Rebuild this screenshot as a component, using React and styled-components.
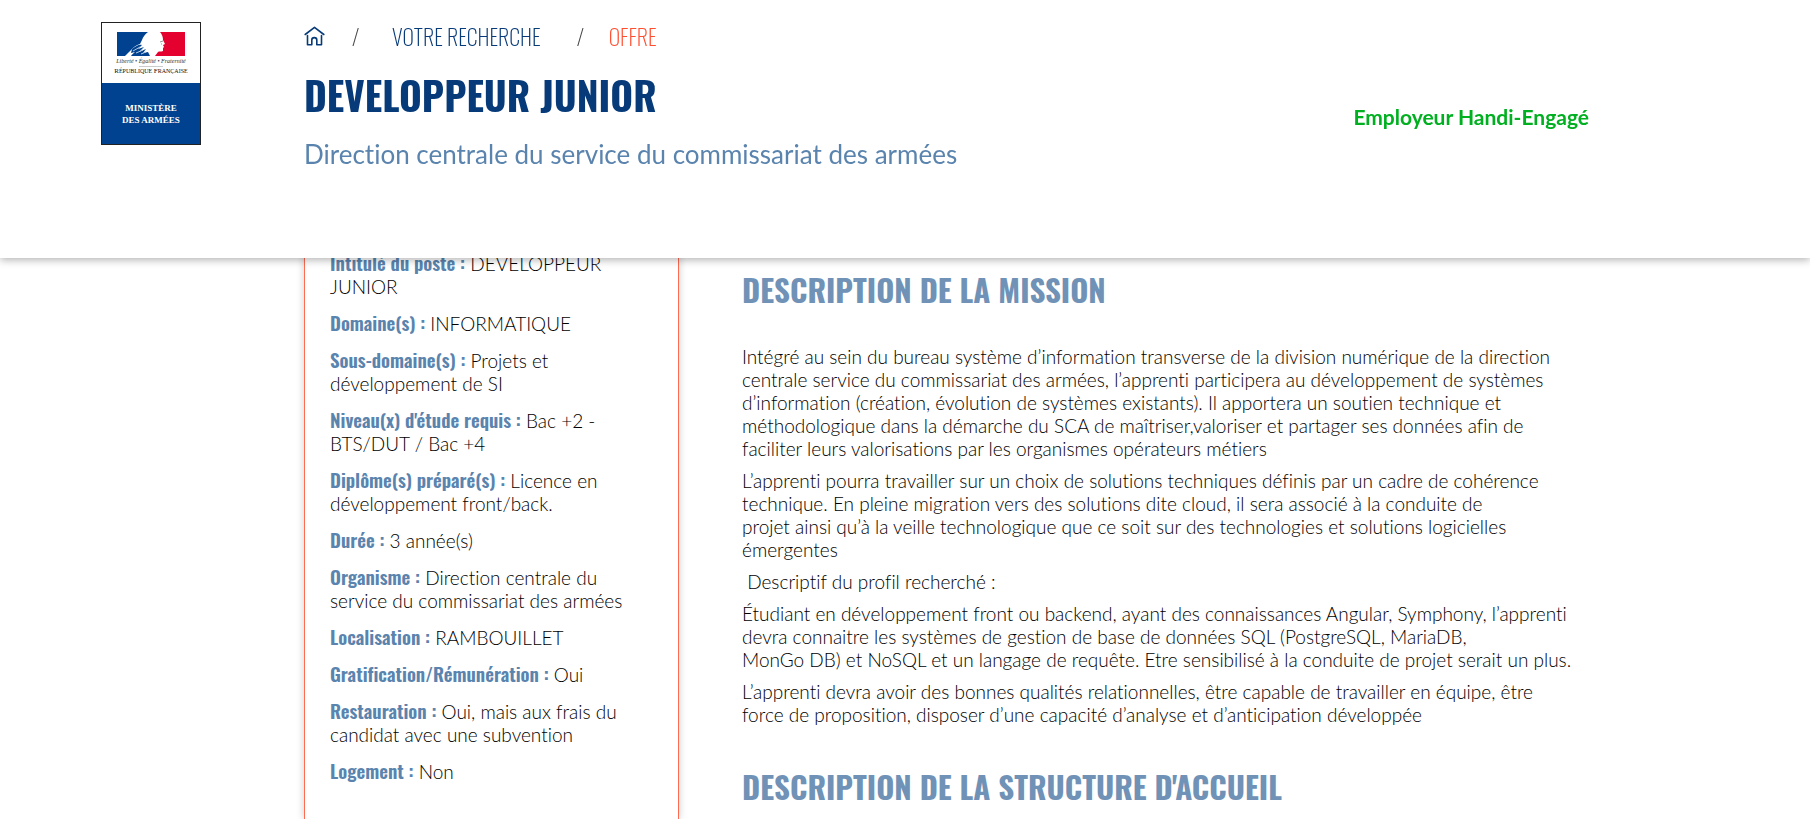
import React from "react";
import styled, { createGlobalStyle } from "styled-components";

const condensed = '"Oswald", "Roboto Condensed", "Open Sans Condensed", "Liberation Sans Narrow", "Liberation Sans", sans-serif';

const GlobalStyle = createGlobalStyle`
  *, *::before, *::after { box-sizing: border-box; }
  body {
    margin: 0;
    background: #fff;
    color: #000;
    font-family: "Lato", "Liberation Sans", sans-serif;
    font-size: 19px;
    font-weight: 300;
    line-height: 23px;
    font-variant-ligatures: none;
  }
  h1, h2, p, ul, ol { margin: 0; padding: 0; }
  ul, ol { list-style: none; }
`;

const Header = styled.header`
  position: fixed;
  top: 0;
  left: 0;
  right: 0;
  z-index: 10;
  display: grid;
  grid-template-columns: 203px 1fr auto;
  align-items: start;
  padding: 22px 221px 86px 101px;
  background: #fff;
  box-shadow: 0 2px 8px rgba(0, 0, 0, 0.3);
`;

const LogoLink = styled.a`
  display: block;
  width: 100px;
  height: 124px;
`;

const Heading = styled.div`
  display: flex;
  flex-direction: column;
`;

const Breadcrumb = styled.ol`
  display: flex;
  align-items: center;
  height: 28px;
  font-family: ${condensed};
  font-size: 22px;
  font-weight: 200;
  line-height: 28px;
`;

const Crumb = styled.li`
  display: flex;
  align-items: center;
  color: #ff4d2e;
  & + &::before {
    content: "/";
    width: 34px;
    padding-left: 2px;
    color: #444;
  }
  &:nth-child(2) { margin-left: 25px; }
  &:nth-child(2)::before { width: 42px; }
  &:nth-child(3) { margin-left: 34px; }
`;

const CrumbLink = styled.a`
  display: flex;
  color: #063a78;
  text-decoration: none;
`;

const Title = styled.h1`
  margin-top: 18px;
  color: #063a78;
  font-family: ${condensed};
  font-size: 39px;
  font-weight: 700;
  line-height: 52px;
  white-space: nowrap;
`;

const Organisation = styled.p`
  margin-top: 16px;
  color: #5a84ae;
  font-size: 26px;
  font-weight: 400;
  line-height: 36px;
`;

const Badge = styled.p`
  margin-top: 83px;
  color: #00b020;
  font-size: 21px;
  font-weight: 700;
  line-height: 24px;
`;

const Page = styled.main`
  display: grid;
  grid-template-columns: 375px minmax(0, 1fr);
  min-height: 100vh;
  padding: 252px 234px 0 304px;
`;

const Sidebar = styled.aside`
  padding: 0 44px 0 25px;
  border: solid #ff6b50;
  border-width: 0 1px;
  box-shadow: 0 0 8px rgba(0, 0, 0, 0.2);
`;

const Facts = styled.ul`
  display: flex;
  flex-direction: column;
  gap: 14px;
`;

const Label = styled.strong`
  color: #5a84ae;
  font-family: ${condensed};
  font-weight: 600;
  line-height: 1;
`;

const Content = styled.div`
  display: flex;
  flex-direction: column;
  gap: 38px;
  padding: 15px 0 0 63px;
`;

const Section = styled.section`
  display: flex;
  flex-direction: column;
  gap: 33px;
`;

const SectionTitle = styled.h2`
  color: #7092b6;
  font-family: ${condensed};
  font-size: 31px;
  font-weight: 700;
  line-height: 45px;
`;

const Prose = styled.div`
  display: flex;
  flex-direction: column;
  gap: 9px;
`;

const facts = [
  ["Intitulé du poste", "DEVELOPPEUR JUNIOR"],
  ["Domaine(s)", "INFORMATIQUE"],
  ["Sous-domaine(s)", "Projets et développement de SI"],
  ["Niveau(x) d'étude requis", "Bac +2 - BTS/DUT / Bac +4"],
  ["Diplôme(s) préparé(s)", "Licence en développement front/back."],
  ["Durée", "3 année(s)"],
  ["Organisme", "Direction centrale du service du commissariat des armées"],
  ["Localisation", "RAMBOUILLET"],
  ["Gratification/Rémunération", "Oui"],
  ["Restauration", "Oui, mais aux frais du candidat avec une subvention"],
  ["Logement", "Non"],
];

const mission = [
  "Intégré au sein du bureau système d’information transverse de la division numérique de la direction centrale service du commissariat des armées, l’apprenti participera au développement de systèmes d’information (création, évolution de systèmes existants). Il apportera un soutien technique et méthodologique dans la démarche du SCA de maîtriser,valoriser et partager ses données afin de faciliter leurs valorisations par les organismes opérateurs métiers",
  "L’apprenti pourra travailler sur un choix de solutions techniques définis par un cadre de cohérence technique. En pleine migration vers des solutions dite cloud, il sera associé à la conduite de projet\u00a0ainsi\u00a0qu’à la veille technologique que ce soit sur des technologies et solutions logicielles émergentes",
  "\u00a0Descriptif du profil recherché :",
  "Étudiant en développement front ou backend, ayant des connaissances Angular, Symphony, l’apprenti devra connaitre les systèmes de gestion de base de données SQL (PostgreSQL, MariaDB, MonGo\u00a0DB)\u00a0et\u00a0NoSQL et un langage de requête. Etre sensibilisé à la conduite de projet serait un plus.",
  "L’apprenti devra avoir des bonnes qualités relationnelles, être capable de travailler en équipe, être force de proposition, disposer d’une capacité d’analyse et d’anticipation développée",
];

function MinistryLogo() {
  return (
    <svg width="100" height="124" viewBox="0 0 100 124" role="img" aria-label="Ministère des Armées">
      <rect x="0.5" y="0.5" width="99" height="122" fill="#fff" stroke="#222" />
      <rect x="1" y="61" width="98" height="61" fill="#00428f" />
      <rect x="16" y="10" width="68" height="24" fill="#fff" />
      <path d="M16 10h31c-3 2-5 5-6 8l-2 4c-3 1-5 2-8 5l-3 3-4 4h-8z" fill="#00428f" />
      <path d="M84 10H59c2 2 3 5 3 8l2 4-2 1 1 2-1 1v3c-2 1-4 0-5 1l-3 4h30z" fill="#e4002f" />
      <path d="M31 27c4-3 7-5 10-4l-4 4 6-2-5 5 7-3-3 4 5-1 2 4H30c1-2 3-3 4-4l-4 1z" fill="#00428f" />
      <path d="M32 29l7-4M35 31l7-3M40 32l5-2" stroke="#b6cbe2" strokeWidth="1" fill="none" />
      <path d="M59 20l3-1M60 22l1 0" stroke="#777" strokeWidth="0.8" fill="none" />
      <g fontFamily='"Liberation Serif", serif' textAnchor="middle">
        <text x="50" y="41" fontSize="6" fontStyle="italic" fill="#333">Liberté • Égalité • Fraternité</text>
        <path d="M38 44.500h24" stroke="#999" strokeWidth="0.500" />
        <text x="50" y="51" fontSize="6" fill="#111">
          <tspan fontSize="7">R</tspan>ÉPUBLIQUE <tspan fontSize="7">F</tspan>RANÇAISE
        </text>
        <g fontSize="9" fontWeight="700" fill="#fff">
          <text x="50" y="89">MINISTÈRE</text>
          <text x="50" y="101">DES ARMÉES</text>
        </g>
      </g>
    </svg>
  );
}

function HomeIcon() {
  return (
    <svg width="21" height="21" viewBox="0 0 21 21" fill="none" stroke="#063a78" strokeWidth="1.600" strokeLinecap="round" strokeLinejoin="round" aria-hidden="true">
      <path d="M1.200 8.500 10.500 1.300 19.800 8.500" />
      <path d="M3.500 9.500v9.200h4.300v-4.700c0-3.200 5-3.200 5 0v4.700h4.700V9.500" />
    </svg>
  );
}

export default function App() {
  return (
    <>
      <GlobalStyle />
      <Header>
        <LogoLink href="#accueil"><MinistryLogo /></LogoLink>
        <Heading>
          <nav aria-label="Fil d'Ariane">
            <Breadcrumb>
              <Crumb><CrumbLink href="#accueil" aria-label="Accueil"><HomeIcon /></CrumbLink></Crumb>
              <Crumb><CrumbLink href="#recherche">VOTRE RECHERCHE</CrumbLink></Crumb>
              <Crumb aria-current="page">OFFRE</Crumb>
            </Breadcrumb>
          </nav>
          <Title>DEVELOPPEUR JUNIOR</Title>
          <Organisation>Direction centrale du service du commissariat des armées</Organisation>
        </Heading>
        <Badge>Employeur Handi-Engagé</Badge>
      </Header>
      <Page>
        <Sidebar>
          <Facts>
            {facts.map(([label, value]) => (
              <li key={label}><Label>{label} :</Label> {value}</li>
            ))}
          </Facts>
        </Sidebar>
        <Content>
          <Section>
            <SectionTitle>DESCRIPTION DE LA MISSION</SectionTitle>
            <Prose>{mission.map((text) => <p key={text}>{text}</p>)}</Prose>
          </Section>
          <Section>
            <SectionTitle>DESCRIPTION DE LA STRUCTURE D'ACCUEIL</SectionTitle>
          </Section>
        </Content>
      </Page>
    </>
  );
}
